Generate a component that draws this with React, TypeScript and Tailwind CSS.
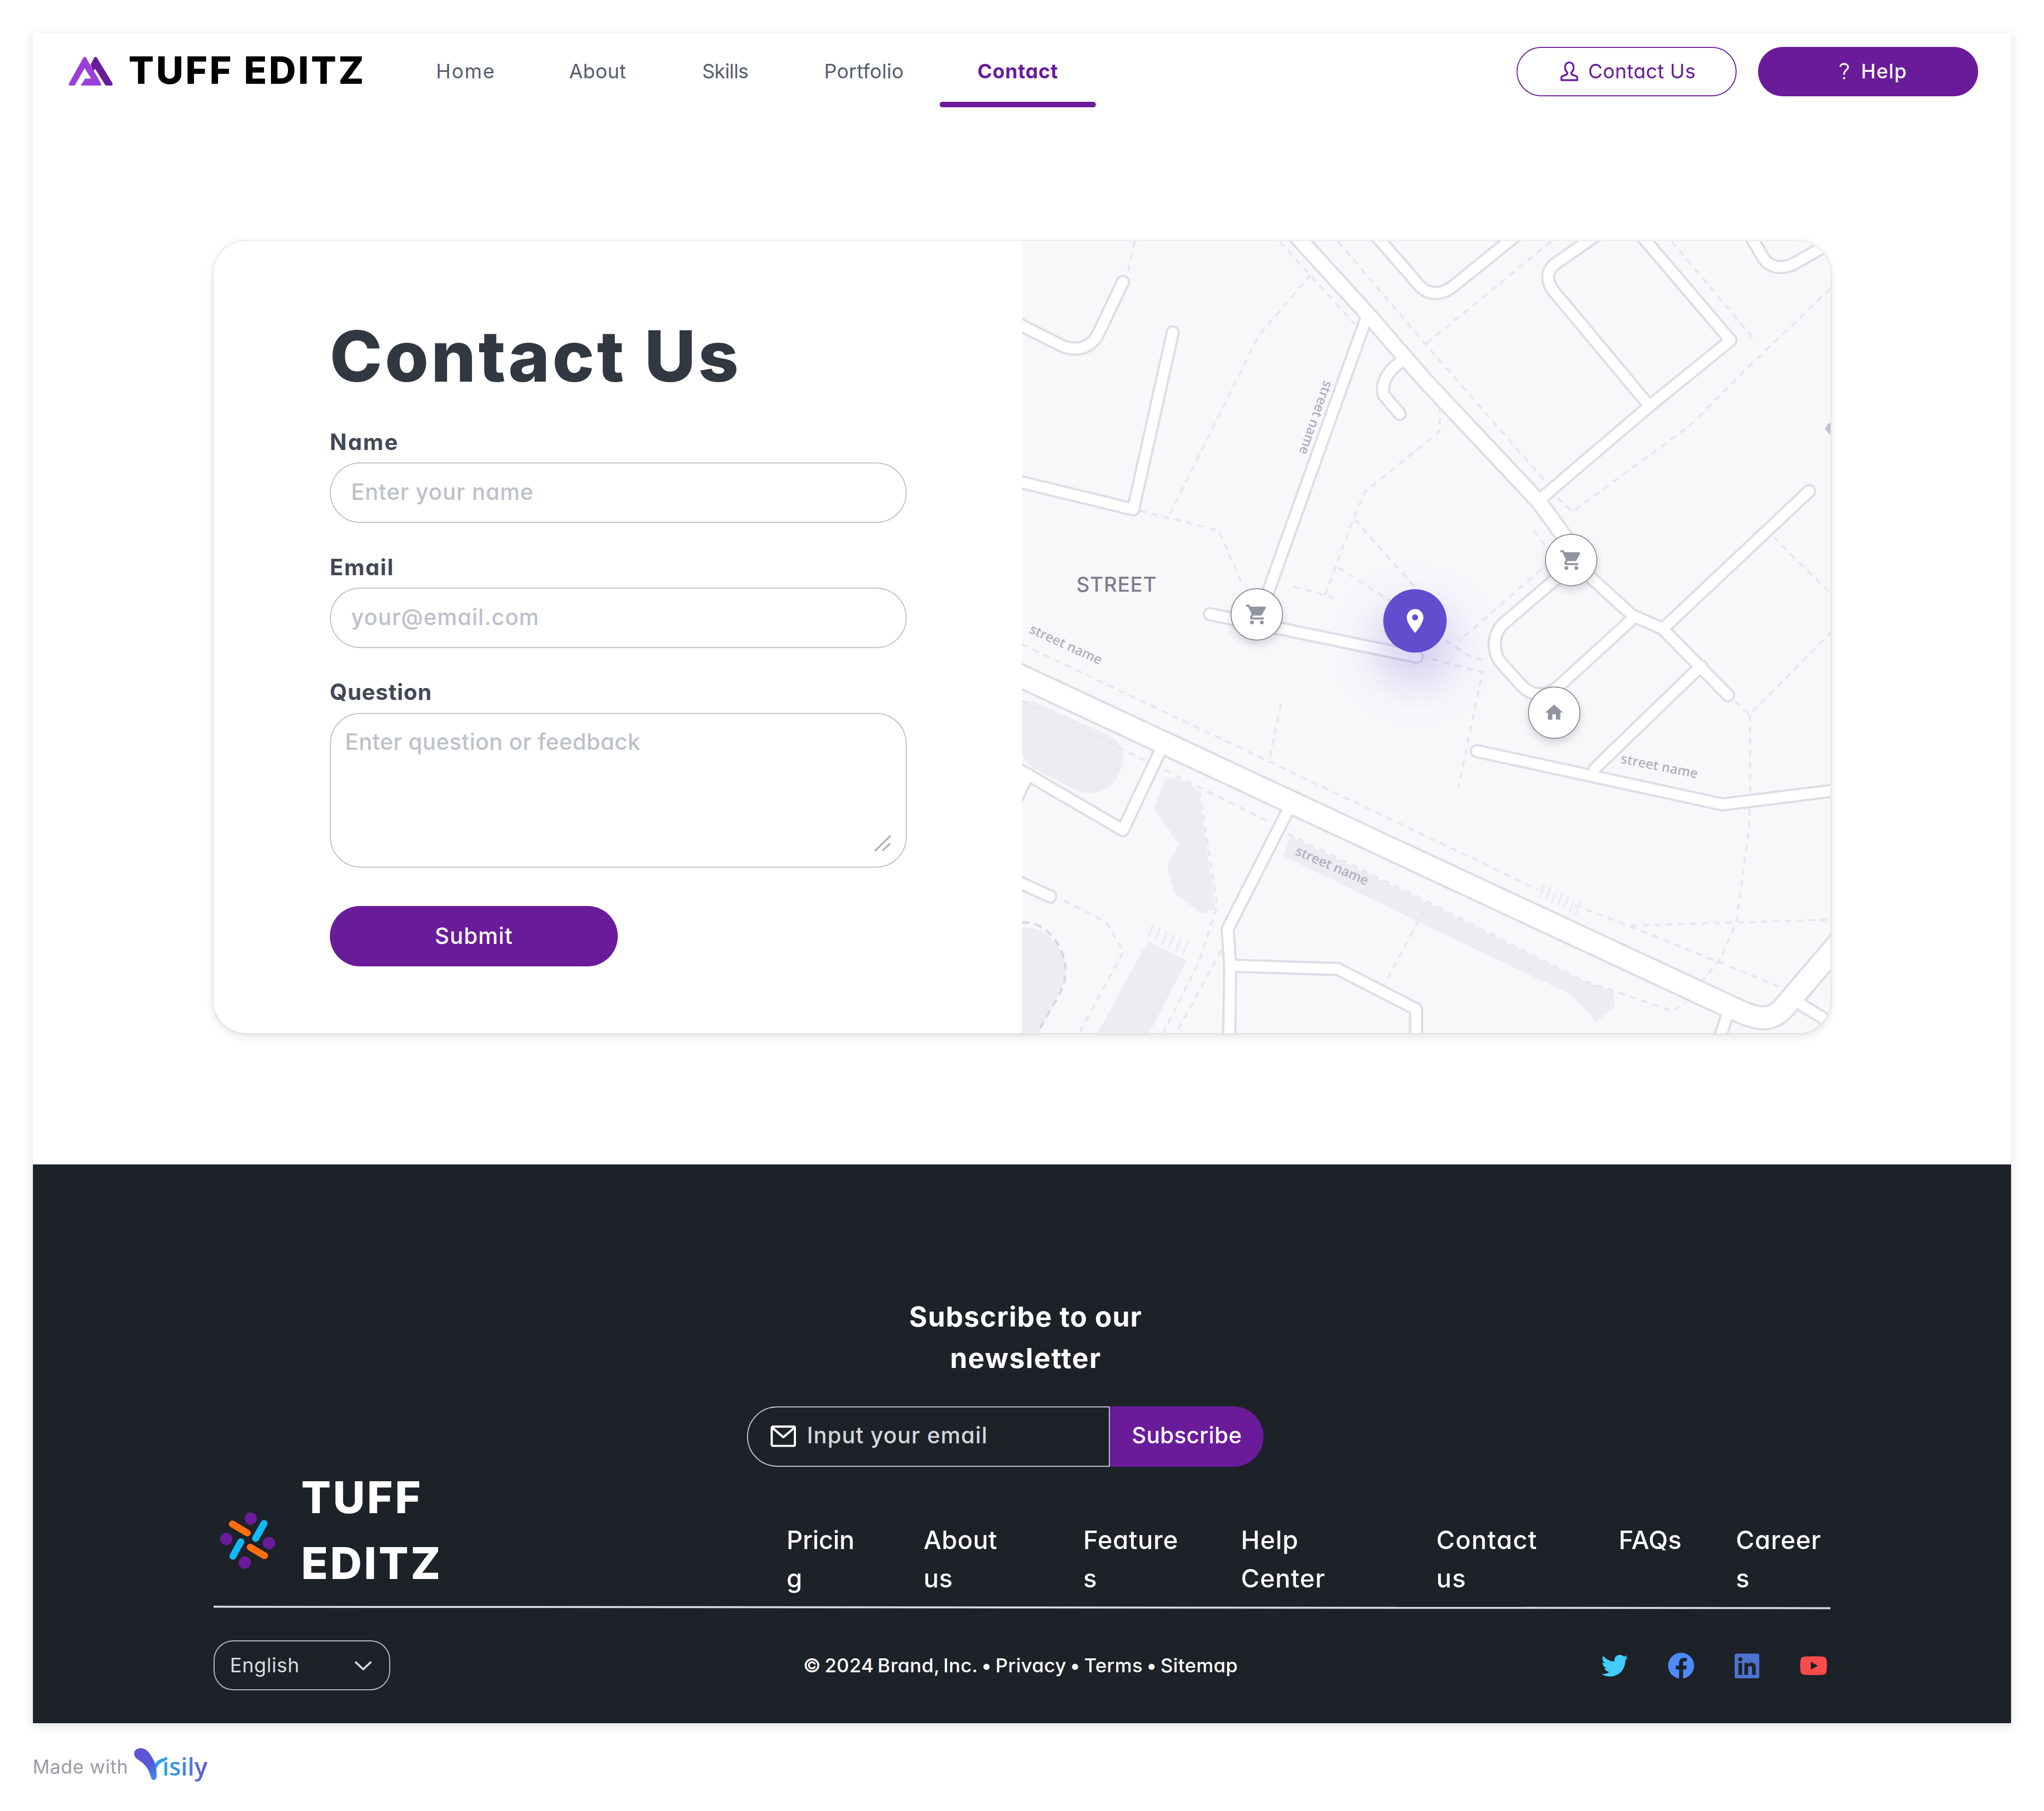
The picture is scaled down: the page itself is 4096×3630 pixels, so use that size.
import type { ReactNode } from 'react';
import { FaFacebook, FaLinkedin, FaTwitter, FaYoutube } from 'react-icons/fa';
import { MdHome, MdLocationOn, MdShoppingCart } from 'react-icons/md';

/* ---------- Header ---------- */

function BrandMark() {
  return (
    <svg className="h-[60px] w-[90px] shrink-0" viewBox="138 116 90 60">
      <path d="M183 133 L190 119 Q193 115 196 119 L227 170 Q229 175 224 175 H215 Q213 175 212 173 L192 141 L189 146 Z" fill="#6a1b9a" />
      <path d="M168 119 Q171 115 174 119 L203 169 Q206 175 201 175 H163 L172 161 H184 L171 140 L152 173 Q151 175 149 175 H141 Q138 175 139 171 Z" fill="#9c3fd8" />
    </svg>
  );
}

function NavItem({ children, active = false, tracking }: { children: ReactNode; active?: boolean; tracking: string }) {
  return (
    <a className={`relative flex h-[155px] items-center px-[76px] pt-[2px] ${tracking} ${active ? 'font-bold text-[#6a1b9a]' : 'text-[#565d6d]'}`}>
      {children}
      {active && <span className="absolute inset-x-0 bottom-[5px] h-[11px] rounded-full bg-[#6a1b9a]" />}
    </a>
  );
}

function Header() {
  return (
    <header className="flex h-[155px] items-center pr-[66px] pl-[71px]">
      <div className="flex w-[668px] shrink-0 items-center">
        <BrandMark />
        <h1 className="ml-[32px] pb-[5px] text-[76px] leading-none font-extrabold tracking-[0.055em] whitespace-nowrap text-black">TUFF EDITZ</h1>
      </div>
      <nav className="flex text-[40px] whitespace-nowrap [font-feature-settings:'cv11']">
        <div className="flex w-[269px]"><NavItem tracking="tracking-[0.050em]">Home</NavItem></div>
        <div className="flex w-[269px]"><NavItem tracking="tracking-[0.015em]">About</NavItem></div>
        <div className="flex w-[247px]"><NavItem tracking="-tracking-[0.018em]">Skills</NavItem></div>
        <div className="flex w-[310px]"><NavItem tracking="tracking-[0.008em]">Portfolio</NavItem></div>
        <div className="flex"><NavItem tracking="tracking-[0.024em]" active>Contact</NavItem></div>
      </nav>
      <div className="ml-auto flex gap-[44px] text-[40px] [font-feature-settings:'cv11']">
        <button className="flex h-[100px] w-[445px] items-center rounded-full border-[3px] border-[#6a1b9a] pl-[87px] text-[#6a1b9a]">
          <svg className="h-[40px] w-[36px]" viewBox="0 0 36 40" fill="none" stroke="currentColor" strokeWidth="3.6" strokeLinejoin="round">
            <path d="M14 22.500 C10 19 9 14 9.500 10.500 C10 5 14 2 18 2 S26 5 26.500 10.500 C27 14 26 19 22 22.500 L23 26.500 L32 30 Q34 31 34 33 V38 H2 V33 Q2 31 4 30 L13 26.500 Z" />
          </svg>
          <span className="ml-[20px] pt-[1px] tracking-[0.014em] whitespace-nowrap">Contact Us</span>
        </button>
        <button className="flex h-[100px] w-[445px] items-center rounded-full bg-[#6a1b9a] pl-[164px] text-white">
          <svg className="h-[34px] w-[20px]" viewBox="0 0 20 34" fill="none" stroke="currentColor" strokeWidth="3.400">
            <path d="M2 8 C2 4 5 2 9.500 2 C14.500 2 17.500 5 17.500 9 C17.500 14 9.500 15 9.500 22 V24" />
            <path d="M9.500 29 V33" strokeWidth="4" />
          </svg>
          <span className="ml-[24px] pt-[1px] font-medium tracking-[0.032em]">Help</span>
        </button>
      </div>
    </header>
  );
}

/* ---------- Contact form ---------- */

function ContactForm() {
  return (
    <form className="w-[1635px] shrink-0 pt-[163px] pl-[235px]">
      <h2 className="h-[140px] text-[143px] leading-[140px] font-extrabold tracking-[0.035em] whitespace-nowrap text-[#323842]">Contact Us</h2>
      <div className="mt-[74px] w-[1167px] text-[45px] font-medium [font-feature-settings:'cv11']">
        <label className="block h-[60px] leading-[60px] font-bold tracking-[0.052em] text-[#424856]">Name</label>
        <div className="mt-[11px] flex h-[122px] items-center rounded-full border-[3px] border-[#bcc1ca] pb-[2px] pl-[41px] tracking-[0.022em] text-[#bcc1ca]">Enter your name</div>
        <label className="mt-[60px] block h-[60px] leading-[60px] font-bold tracking-[0.040em] text-[#424856]">Email</label>
        <div className="mt-[11px] flex h-[122px] items-center rounded-full border-[3px] border-[#bcc1ca] pb-[2px] pl-[41px] tracking-[0.026em] text-[#bcc1ca]">your@email.com</div>
        <label className="mt-[60px] block h-[60px] leading-[60px] font-bold tracking-[0.021em] text-[#424856]">Question</label>
        <div className="mt-[11px] flex h-[313px] items-start justify-between rounded-[62px] border-[3px] border-[#bcc1ca] pt-[28px] pr-[30px] pl-[29px] leading-[60px] text-[#bcc1ca]">
          <span className="tracking-[0.012em]">Enter question or feedback</span>
          <svg className="mt-[217px] h-[34px] w-[34px]" viewBox="0 0 34 34" fill="none" stroke="#a9aeb8" strokeWidth="3.500" strokeLinecap="round">
            <path d="M2 32 L32 3 M18 31 L31 19" />
          </svg>
        </div>
        <button className="mt-[78px] block h-[122px] w-[583px] rounded-full bg-[#6a1b9a] pb-[1px] text-center font-medium tracking-[0.028em] text-white">Submit</button>
      </div>
    </form>
  );
}

/* ---------- Map ---------- */

const thinRoads = [
  'M2040 646 L2142 697 C2175 714 2205 706 2221 676 L2271 571',
  'M2372 673 L2292 1031 L2040 970',
  'M2763 645 L2564 1200',
  'M2447 1243 L2865 1329',
  'M2842 728 C2806 746 2792 778 2799 800 L2831 838',
  'M2780 474 L2862 568 C2885 600 2915 600 2942 577 L3070 474',
  'M3238 470 L3147 533 C3127 548 3127 569 3142 589 L3336 822',
  'M3317 474 L3500 689 L3336 822 L3112 1013',
  'M3538 474 L3568 525 C3582 543 3607 546 3632 532 L3722 481',
  'M3659 994 L3366 1270',
  'M3178 1145 L3042 1261 C3018 1282 3017 1320 3038 1344 L3076 1386 C3098 1410 3125 1410 3148 1393 L3300 1254',
  'M3178 1133 L3302 1246 L3362 1272 L3495 1407',
  'M3440 1348 L3225 1556',
  'M2987 1520 L3484 1628 L3725 1598',
  'M3495 2050 L3475 2110',
  'M3628 2024 L3710 2074',
  'M2352 1508 L2271 1680 L2076 1566 L2040 1546',
  'M2080 1567 L2056 1615',
  'M2610 1630 L2483 1880 L2488 1955 L2486 2110',
  'M2488 1954 L2706 1961 L2864 2042 L2864 2110',
  'M2040 1776 L2124 1814',
];
const mediumRoads = ['M2615 470 L2766 636 L2880 768 L3112 1015 L3186 1116'];
const wideRoads = ['M2030 1352 L2880 1749 L3515 2045 C3560 2066 3585 2064 3606 2041 L3722 1905'];

const footpaths = [
  'M2295 489 L2280 556',
  'M2588 489 L2740 656',
  'M2651 556 L2546 679 L2363 1046',
  'M2306 1034 L2465 1074 L2515 1189',
  'M2706 489 L2883 697 L3126 975',
  'M3137 489 L2883 697',
  'M3381 489 L3552 692',
  'M3702 585 L3544 735 L3416 863 L3180 1036 L3148 1005',
  'M2912 822 L2912 873 L2761 995 L2737 1051 L2680 1204',
  'M2617 1187 L2706 1212',
  'M2740 1051 L2860 1187',
  'M2706 1148 L2813 1217',
  'M3102 1074 L3125 1104',
  'M3116 1153 L2976 1276 L2950 1296',
  'M2923 1296 L2982 1334 L3008 1334',
  'M2896 1334 L2998 1360 L2950 1593',
  'M3509 1419 L3539 1446 L3702 1281',
  'M3539 1446 L3540 1612 L3536 1687 L3512 1864 L3480 1939 L3442 1987',
  'M3587 1087 L3702 1201',
  'M2067 1304 L2880 1690 L3110 1800',
  'M3185 1832 L3298 1875 L3603 1998',
  'M3298 1873 L3702 1861',
  'M2591 1425 L2567 1537',
  'M2067 1418 L2322 1542',
  'M2356 1559 L2572 1666',
  'M2604 1687 L2880 1821 L3201 1984 L3384 2046 L3410 2027',
  'M2426 1601 L2462 1832 L2426 1944 L2353 2090',
  'M2470 1923 L2379 2090',
  'M2152 1822 L2238 1867 L2272 1926 L2183 2090',
  'M2880 1842 L2800 1993',
];

function Pin({ className, children }: { className: string; children: ReactNode }) {
  return (
    <div className={`absolute flex h-[106px] w-[106px] items-center justify-center rounded-full border-[3px] border-[#8a8f99] bg-white text-[48px] text-[#9095a0] shadow-[0_8px_16px_rgba(23,26,31,0.16)] ${className}`}>
      {children}
    </div>
  );
}

function StreetMap() {
  return (
    <div className="relative h-[1602px] w-[1635px] shrink-0 overflow-hidden rounded-r-[66px] bg-[#f8f8fb]">
      <svg className="block h-full w-full" viewBox="2067 488 1635 1602" fill="none">
        <g fill="#edecf2">
          <path d="M2060 1440 Q2067 1415 2091 1420 L2240 1487 Q2275 1505 2271 1540 C2264 1590 2225 1615 2180 1601 L2091 1555 Q2075 1545 2060 1515 Z" />
          <path d="M2358 1573 Q2400 1575 2424 1601 L2459 1840 L2431 1849 L2376 1808 L2361 1752 L2385 1709 L2334 1636 Z" />
          <path d="M2609 1692 L2880 1824 L3201 1984 L3264 2008 L3266 2038 L3228 2067 L3180 2014 L2880 1871 L2596 1732 Z" />
          <path d="M2322 1904 L2400 1944 L2322 2095 L2217 2095 Z" />
          <path d="M2060 1877 C2112 1872 2155 1912 2155 1965 C2155 2010 2120 2040 2098 2095 H2060 Z" />
        </g>
        <g stroke="#e7e7ec" strokeWidth="4.500" strokeDasharray="13 11">
          {footpaths.map((d) => <path key={d} d={d} />)}
        </g>
        <path d="M2067 1867 C2112 1862 2155 1912 2155 1965 C2155 2010 2120 2040 2098 2095" stroke="#d9d8e2" strokeWidth="5" strokeDasharray="15 11" />
        <g stroke="#ececf1" strokeWidth="4">
          {[0, 1, 2, 3, 4, 5, 6].map((i) => (
            <path key={i} d="M0 0 L-10 26" transform={`translate(${3124 + i * 12} ${1790 + i * 6})`} />
          ))}
          {[0, 1, 2, 3, 4, 5].map((i) => (
            <path key={i} d="M0 0 L-10 28" transform={`translate(${2332 + i * 14} ${1870 + i * 7})`} />
          ))}
        </g>
        <g stroke="#dfdde6" strokeLinecap="round" strokeLinejoin="round">
          <g strokeWidth="29">{thinRoads.map((d) => <path key={d} d={d} />)}</g>
          <g strokeWidth="37">{mediumRoads.map((d) => <path key={d} d={d} />)}</g>
          <g strokeWidth="51">{wideRoads.map((d) => <path key={d} d={d} />)}</g>
        </g>
        <g stroke="#ffffff" strokeLinecap="round" strokeLinejoin="round">
          <g strokeWidth="20">{thinRoads.map((d) => <path key={d} d={d} />)}</g>
          <g strokeWidth="28">{mediumRoads.map((d) => <path key={d} d={d} />)}</g>
          <g strokeWidth="42">{wideRoads.map((d) => <path key={d} d={d} />)}</g>
        </g>
        <path d="M3691 868 L3697 858 L3703 856 V880 L3697 876 Z" fill="#c4c3cf" />
        <g className="font-['Open_Sans'] text-[27px] font-semibold" fill="#b1b0bf">
          <text transform="translate(2678 769) rotate(109)" textLength="156">street name</text>
          <text transform="translate(2080 1280) rotate(24.500)" textLength="158">street name</text>
          <text transform="translate(3277 1544) rotate(11.300)" textLength="158">street name</text>
          <text transform="translate(2618 1729) rotate(23.500)" textLength="158">street name</text>
        </g>
        <text x="2177" y="1198" className="text-[41px] font-medium tracking-[0.028em]" fill="#7f7d8f">STREET</text>
      </svg>
      <Pin className="top-[702px] left-[422px]"><MdShoppingCart /></Pin>
      <Pin className="top-[592px] left-[1058px]"><MdShoppingCart /></Pin>
      <Pin className="top-[901px] left-[1023px]"><MdHome className="text-[43px]" /></Pin>
      <div className="absolute top-[704px] left-[731px] flex h-[128px] w-[128px] items-center justify-center rounded-full bg-[#624dcf] text-[58px] text-white shadow-[0_48px_100px_rgba(98,77,207,0.38)]">
        <MdLocationOn />
      </div>
    </div>
  );
}

/* ---------- Footer ---------- */

function FooterMark() {
  return (
    <svg className="mt-[93px] h-[122px] w-[122px]" viewBox="440 3055 122 122" fill="none">
      <g fill="#6a1b9a">
        <circle cx="507" cy="3072" r="12.500" />
        <circle cx="457.500" cy="3113.500" r="12.500" />
        <circle cx="544" cy="3121.500" r="12.500" />
        <circle cx="495" cy="3161" r="12.500" />
      </g>
      <g strokeWidth="14" strokeLinecap="round">
        <path d="M470 3083 L500 3101 M506 3130 L535 3147" stroke="#ff6f0f" />
        <path d="M534 3082 L517 3112 M487 3119 L471 3148" stroke="#12b9f9" />
      </g>
    </svg>
  );
}

const links: { label: ReactNode; box: string }[] = [
  { label: <>Pricin<br />g</>, box: 'w-[277px] -tracking-[0.006em]' },
  { label: <>About<br />us</>, box: 'w-[323px] tracking-[0.010em]' },
  { label: <>Feature<br />s</>, box: 'w-[319px] tracking-[0.016em]' },
  { label: <>Help<br />Center</>, box: 'w-[395px] tracking-[0.020em]' },
  { label: <>Contact<br />us</>, box: 'w-[369px] tracking-[0.030em]' },
  { label: <>FAQs</>, box: 'w-[237px] tracking-[0.005em]' },
  { label: <>Career<br />s</>, box: 'w-[188px] tracking-[0.018em]' },
];

function Footer() {
  return (
    <footer className="h-[1130px] bg-[#1d2128] pt-[265px] text-white [font-feature-settings:'cv11']">
      <div className="pl-[15px] text-center text-[56px] leading-[84px] font-bold [font-feature-settings:normal]">
        <p className="tracking-[0.023em]">Subscribe to our</p>
        <p className="tracking-[0.030em]">newsletter</p>
      </div>
      <div className="mt-[56px] ml-[1444px] flex h-[122px] text-[45px]">
        <div className="flex w-[734px] items-center rounded-l-full border-[3px] border-[#c8ccd3] pl-[45px]">
          <svg className="h-[44px] w-[52px]" viewBox="0 0 52 44" fill="none" stroke="#ffffff" strokeWidth="4.500" strokeLinejoin="round">
            <rect x="2.500" y="2.500" width="47" height="39" rx="2.500" />
            <path d="M4 5 L26 24 L48 5" />
          </svg>
          <span className="ml-[22px] pb-[3px] font-medium tracking-[0.026em] text-[#d3d6dc]">Input your email</span>
        </div>
        <button className="w-[311px] rounded-r-full bg-[#6a1b9a] pb-[3px] font-medium tracking-[0.012em]">Subscribe</button>
      </div>
      <div className="-mt-[5px] flex h-[268px] items-start pl-[373px]">
        <FooterMark />
        <p className="ml-[47px] w-[982px] text-[89px] leading-[134px] font-extrabold tracking-[0.048em]">
          TUFF
          <br />
          EDITZ
        </p>
        <nav className="mt-[114px] flex text-[51px] leading-[78.500px] font-medium whitespace-nowrap">
          {links.map((l, i) => <a key={i} className={`block ${l.box}`}>{l.label}</a>)}
        </nav>
      </div>
      <div className="mx-[365px] mt-[20px] h-[4px] rotate-[0.05deg] bg-[#d6d9de]" />
      <div className="mx-[365px] mt-[65px] flex items-center text-[40px]">
        <div className="flex-1">
          <div className="flex h-[101px] w-[357px] items-center justify-between rounded-[40px] border-[3px] border-[#bcc1ca] pr-[34px] pl-[31px] text-[#d8dbe0]">
            <span className="tracking-[0.016em]">English</span>
            <svg className="h-[20px] w-[36px]" viewBox="0 0 36 20" fill="none" stroke="currentColor" strokeWidth="4">
              <path d="M2 2 L18 17 L34 2" />
            </svg>
          </div>
        </div>
        <p className="pt-[1px] text-[39px] font-medium tracking-[0.011em] [word-spacing:-0.09em] whitespace-nowrap">© 2024 Brand, Inc. • Privacy • Terms • Sitemap</p>
        <div className="flex flex-1 items-center justify-end gap-[80px] pt-[1px] pr-[6px]">
          <FaTwitter className="h-[54px] w-[54px] text-[#41cefb]" />
          <FaFacebook className="h-[54px] w-[54px] text-[#4f8afb]" />
          <FaLinkedin className="h-[57px] w-[52px] text-[#4c73cf]" />
          <FaYoutube className="h-[56px] w-[57px] text-[#fb4c4c]" />
        </div>
      </div>
    </footer>
  );
}

function MadeWith() {
  return (
    <div className="mt-[45px] ml-[66px] flex h-[88px] items-center text-[38px]">
      <span className="pt-[1px] tracking-[0.019em] whitespace-nowrap text-[#9b9ba7]">Made with</span>
      <svg className="ml-[11px] h-[88px] w-[160px]" viewBox="271 3530 160 88">
        <defs>
          <linearGradient id="word" x1="0" x2="1">
            <stop offset="0" stopColor="#2ba4e6" />
            <stop offset="0.600" stopColor="#4a7fe0" />
            <stop offset="1" stopColor="#6a4fcf" />
          </linearGradient>
          <linearGradient id="stem" x1="0" y1="0" x2="0.700" y2="1">
            <stop offset="0" stopColor="#6153cf" />
            <stop offset="0.700" stopColor="#5558dc" />
            <stop offset="1" stopColor="#3e86e6" />
          </linearGradient>
        </defs>
        <path d="M309 3590 C312 3576 318 3563 331 3560" stroke="#2ba4e6" strokeWidth="7" strokeLinecap="round" fill="none" />
        <path d="M272 3549 C271 3541 277 3536 285 3536 C297 3536 305 3547 313 3564 C317 3574 318 3586 317 3595 C316 3602 308 3602 306 3596 C303 3585 300 3576 291 3568 C283 3560 273 3558 272 3549 Z" fill="url(#stem)" />
        <text x="329" y="3592" className="font-['Open_Sans'] text-[50px] font-semibold" textLength="91" lengthAdjust="spacingAndGlyphs" fill="url(#word)">isily</text>
      </svg>
    </div>
  );
}

export default function App() {
  return (
    <div className="h-[3663px] w-[4134px] overflow-hidden bg-white pt-[67px] font-[Inter,sans-serif] [zoom:0.9908]">
      <div className="mx-[67px] bg-white shadow-[0_5px_18px_rgba(23,26,31,0.14)]">
        <Header />
        <main className="h-[2134px] px-[365px] pt-[266px]">
          <section className="flex w-[3270px] rounded-[66px] bg-white shadow-[0_6px_18px_rgba(23,26,31,0.13),0_0_5px_rgba(23,26,31,0.12)]">
            <ContactForm />
            <StreetMap />
          </section>
        </main>
        <Footer />
      </div>
      <MadeWith />
    </div>
  );
}
